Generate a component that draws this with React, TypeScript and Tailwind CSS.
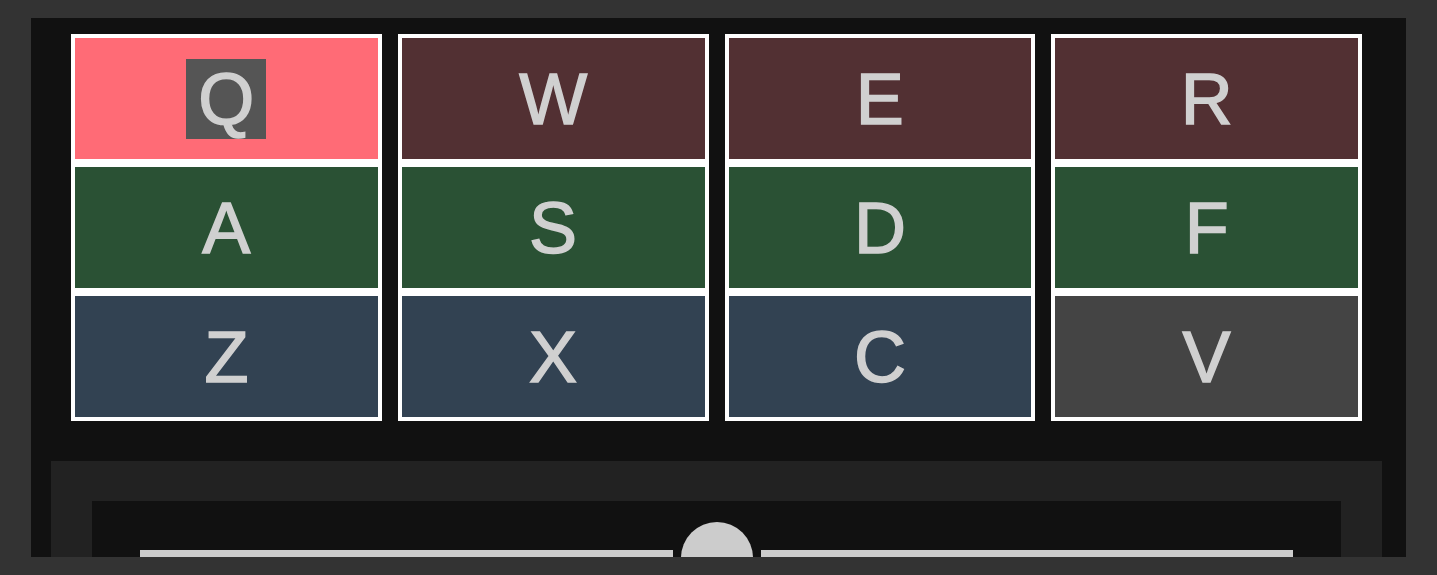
const COLUMNS: Array<Array<{ key: string; tone: string; focused?: boolean }>> = [
  [
    { key: 'Q', tone: 'bg-[#ff6b76]', focused: true },
    { key: 'A', tone: 'bg-[#2a5134]' },
    { key: 'Z', tone: 'bg-[#324252]' },
  ],
  [
    { key: 'W', tone: 'bg-[#523033]' },
    { key: 'S', tone: 'bg-[#2a5134]' },
    { key: 'X', tone: 'bg-[#324252]' },
  ],
  [
    { key: 'E', tone: 'bg-[#523033]' },
    { key: 'D', tone: 'bg-[#2a5134]' },
    { key: 'C', tone: 'bg-[#324252]' },
  ],
  [
    { key: 'R', tone: 'bg-[#523033]' },
    { key: 'F', tone: 'bg-[#2a5134]' },
    { key: 'V', tone: 'bg-[#444444]' },
  ],
]

function KeyCell({ label, tone, focused }: { label: string; tone: string; focused?: boolean }) {
  return (
    <div
      className={
        'flex h-[129px] items-center justify-center border-4 border-white ' + tone
      }
    >
      <span
        className={
          'px-[12px] text-[72px] leading-[80px] text-[#d0d0d0] [-webkit-text-stroke:1.5px_#d0d0d0] ' +
          (focused ? 'bg-[#555555]' : '')
        }
      >
        {label}
      </span>
    </div>
  )
}

export default function App() {
  return (
    <div
      className="h-[575px] bg-[#333333] px-[31px] py-[18px]"
      style={{ fontFamily: '"Liberation Sans", Arial, sans-serif' }}
    >
      <div className="h-full overflow-hidden bg-[#111111]">
        {/* key grid */}
        <div className="grid grid-cols-4 gap-4 pl-[40px] pr-[44px] pt-4">
          {COLUMNS.map((col, i) => (
            <div key={i} className="flex flex-col">
              {col.map((k) => (
                <KeyCell key={k.key} label={k.key} tone={k.tone} focused={k.focused} />
              ))}
            </div>
          ))}
        </div>

        {/* slider panel */}
        <div className="ml-[20px] mr-[24px] mt-[40px] bg-[#222222] px-[41px] pt-[40px]">
          <div className="bg-[#111111] px-[48px] pt-[21px] pb-[40px]">
            <div className="flex h-[72px] items-center gap-2">
              <div className="h-4 flex-1 bg-[#cccccc]" />
              <div className="h-[72px] w-[72px] shrink-0 rounded-full bg-[#cccccc]" />
              <div className="h-4 flex-1 bg-[#cccccc]" />
            </div>
          </div>
        </div>
      </div>
    </div>
  )
}
